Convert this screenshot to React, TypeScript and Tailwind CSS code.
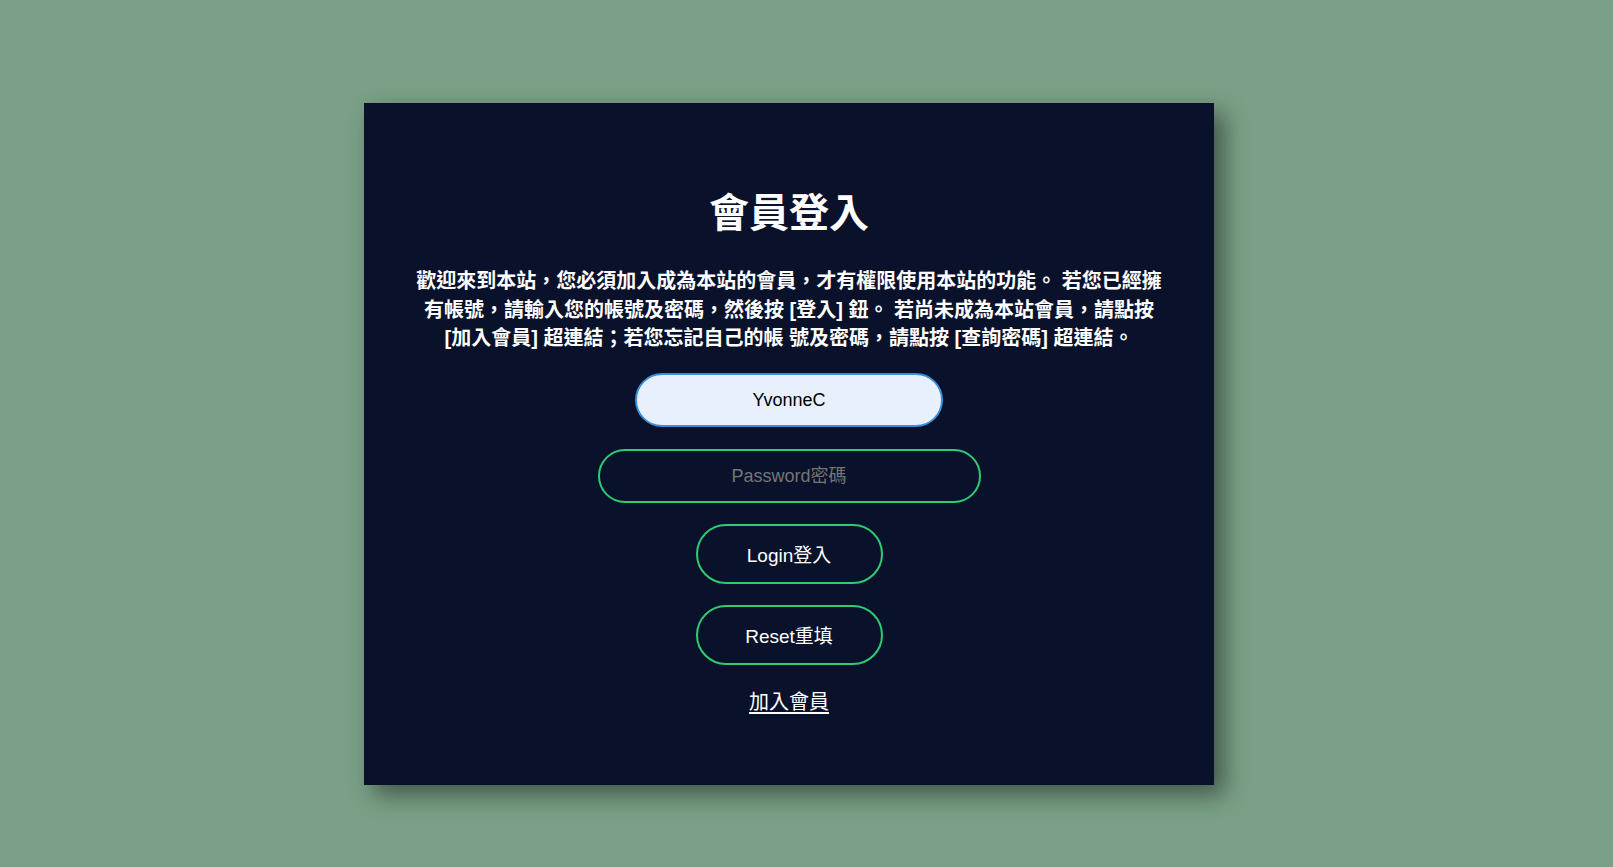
import { useState } from "react";

export default function App() {
  const [user, setUser] = useState("YvonneC");
  const [pass, setPass] = useState("");

  return (
    <div className="min-h-screen w-full bg-[#79a086] pt-[103px] pb-[82px] font-['Liberation_Sans','Noto_Sans_CJK_TC',sans-serif]">
      <div className="ml-[364px] flex h-[682px] w-[850px] flex-col items-center bg-[#0a122b] px-[40px] pt-[87px] shadow-[10px_10px_22px_rgba(0,0,0,0.45)]">
        <h1 className="text-[40px] leading-[40px] font-bold text-white font-['Noto_Sans_CJK_TC',sans-serif]">
          會員登入
        </h1>

        <p className="mt-[37px] text-center text-[20px] leading-[28.6px] font-bold text-white">
          歡迎來到本站，您必須加入成為本站的會員，才有權限使用本站的功能。 若您已經擁
          <br />
          有帳號，請輸入您的帳號及密碼，然後按 [登入] 鈕。 若尚未成為本站會員，請點按
          <br />
          [加入會員] 超連結；若您忘記自己的帳 號及密碼，請點按 [查詢密碼] 超連結。
        </p>

        <form className="mt-[20px] flex flex-col items-center" onSubmit={(e) => e.preventDefault()}>
          <input
            type="text"
            value={user}
            onChange={(e) => setUser(e.target.value)}
            className="h-[54px] w-[308px] rounded-full border-2 border-[#3b8fd8] bg-[#e8f0fe] pt-[2px] text-center text-[18px] text-black outline-none"
          />
          <input
            type="password"
            value={pass}
            onChange={(e) => setPass(e.target.value)}
            placeholder="Password密碼"
            className="mt-[22px] h-[54px] w-[383px] rounded-full border-2 border-[#2ecc71] bg-transparent pt-[2px] text-center text-[18px] text-white outline-none placeholder:text-[#757575]"
          />
          <button
            type="submit"
            className="mt-[21px] h-[60px] w-[187px] rounded-full border-2 border-[#2ecc71] bg-transparent pt-[5px] text-[19px] text-white"
          >
            Login登入
          </button>
          <button
            type="reset"
            onClick={() => { setUser(""); setPass(""); }}
            className="mt-[21px] h-[60px] w-[187px] rounded-full border-2 border-[#2ecc71] bg-transparent pt-[5px] text-[19px] text-white"
          >
            Reset重填
          </button>
        </form>

        <a href="#" className="mt-[24px] text-[20px] leading-[26px] text-white underline underline-offset-[3px]">
          加入會員
        </a>
      </div>
    </div>
  );
}
